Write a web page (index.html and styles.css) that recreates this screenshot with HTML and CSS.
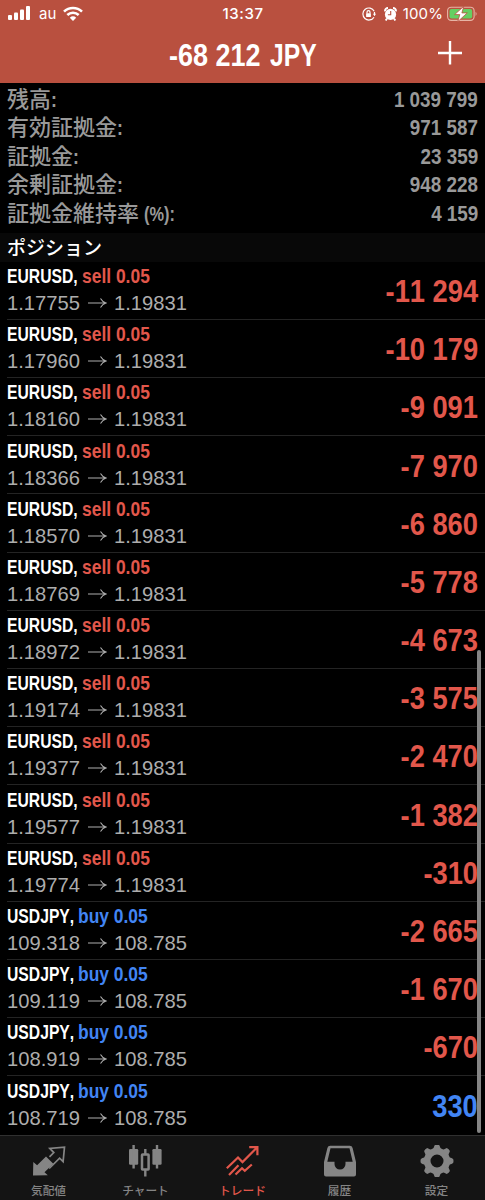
FILE: index.html
```html
<!DOCTYPE html>
<html lang="ja">
<head>
<meta charset="utf-8">
<title>トレード</title>
<link rel="stylesheet" href="styles.css">
</head>
<body>
<div class="app">
  <header class="top">
    <div class="status">
      <div class="status-left">
        <svg class="signal" width="22" height="14" viewBox="0 0 22 14"><rect x="0" y="9" width="4" height="5" rx="1"/><rect x="6" y="6.500" width="4" height="7.500" rx="1"/><rect x="12" y="3.500" width="4" height="10.500" rx="1"/><rect x="18" y="0" width="4" height="14" rx="1"/></svg>
        <span class="carrier">au</span>
        <svg class="wifi" width="20" height="15" viewBox="0 0 20 15" fill="none" stroke="#fff" stroke-width="2.600"><path d="M1 5.600A13 13 0 0 1 19 5.600"/><path d="M4.300 9A8.300 8.300 0 0 1 15.700 9"/><path d="M10 15L6.800 11.700A4.700 4.700 0 0 1 13.200 11.700Z" fill="#fff" stroke="none"/></svg>
      </div>
      <div class="clock">13:37</div>
      <div class="status-right">
        <svg width="14" height="14" viewBox="0 0 14 14" fill="none" stroke="#fff" stroke-width="1.200"><path d="M12.200 4.200A6 6 0 1 0 12 10.200M12.500 5v3.500"/><path d="M10.900 6.700h3.100l-1.500 2.200z" fill="#fff" stroke="none"/><rect x="4.100" y="6.200" width="4.800" height="3.800" rx=".6" fill="#fff" stroke="none"/><path d="M5 6.500V5.200a1.500 1.500 0 0 1 3 0v1.300"/></svg>
        <svg class="alarm" width="13" height="14" viewBox="0 0 13 14"><circle cx="6.500" cy="7.400" r="5.600" fill="#fff"/><path d="M1 4.300A3 3 0 0 1 4 1M12 4.300A3 3 0 0 0 9 1M3 11.500l-1.300 2M10 11.500l1.300 2" fill="none" stroke="#fff" stroke-width="1.900"/><path d="M6.700 4v3.700H3.900" fill="none" stroke="#b9503f" stroke-width="1.100"/></svg>
        <span class="percent">100%</span>
        <svg class="battery" width="31" height="16" viewBox="0 0 31 16"><rect x=".6" y="1.200" width="26.500" height="13.200" rx="3.600" fill="none" stroke="#e7b5a6" stroke-width="1.100"/><rect x="2.500" y="3" width="22.700" height="9.600" rx="2" fill="#65cf62"/><path d="M28.500 5.700q2.400 2 0 4.300z" fill="#dda294"/><path d="M16.800.3L7.600 8.600h5.200L10.700 15.700 20.300 6.900h-5.400z" fill="#fff" stroke="#b9503f" stroke-width=".8"/></svg>
      </div>
    </div>
    <div class="title-bar">
      <div class="title"><span class="amount">-68 212</span><span class="currency">JPY</span></div>
      <svg class="plus" width="24" height="24" viewBox="0 0 24 24"><path d="M12 0v23.500M0 12h24" stroke="#fff" stroke-width="2.400"/></svg>
    </div>
  </header>
  <section class="summary">
    <div class="line"><div class="label">残高<i>:</i></div><b>1 039 799</b></div>
    <div class="line"><div class="label">有効証拠金<i>:</i></div><b>971 587</b></div>
    <div class="line"><div class="label">証拠金<i>:</i></div><b>23 359</b></div>
    <div class="line"><div class="label">余剰証拠金<i>:</i></div><b>948 228</b></div>
    <div class="line"><div class="label">証拠金維持率<i class="unit">(%):</i></div><b>4 159</b></div>
  </section>
  <h2 class="section">ポジション</h2>
  <main class="list" id="list"></main>
  <nav class="tabs">
    <div class="tab"><svg width="34" height="32" viewBox="0 0 34 32"><path d="M1 30.500L1.300 17l3.800 3.300L14 11.600l7.300 7.200-8.800 8.500 3.300 2.900z" fill="currentColor"/><path d="M17.200 23.500L27.600 13.200l3.500 3.400L32.500 2.200 17.800 3.400l4 4.200-4.300 4.200" fill="none" stroke="currentColor" stroke-width="1.700"/></svg><span>気配値</span></div>
    <div class="tab"><svg width="34" height="32" viewBox="0 0 34 32" fill="currentColor"><rect x="0" y="4" width="9.200" height="15.800" rx="1.200"/><rect x="23.400" y="4" width="9.200" height="15.800" rx="1.200"/><path d="M4.600 0v23.500M28 0v23.500M16.300 4v5M16.300 24.500v7" stroke="currentColor" stroke-width="2.400"/><rect x="13" y="9.500" width="6.600" height="15" rx=".5" fill="none" stroke="currentColor" stroke-width="2.500"/></svg><span>チャート</span></div>
    <div class="tab active"><svg width="34" height="32" viewBox="0 0 34 32" fill="none" stroke="currentColor" stroke-width="2.200"><path d="M.8 23.200L12 12.500l4.500 4.600L31 2.500M23.200 2.200h8.200v8M3 30l9.500-9.800M9.500 29.500l6.500-6.300 2.800 2.600 7-6.300"/></svg><span>トレード</span></div>
    <div class="tab"><svg width="34" height="32" viewBox="0 0 34 32"><path fill="currentColor" fill-rule="evenodd" d="M7.200.8h19.600q2.200 0 2.800 2.200L33 17v12.500q0 2-2 2H3q-2 0-2-2V17L4.400 3Q5 .8 7.200.8zM7.500 3.200L4.300 16.800h7.200v2.200a5.500 5.500 0 0 0 11 0v-2.200h7.200L26.500 3.200z"/></svg><span>履歴</span></div>
    <div class="tab"><svg width="34" height="32" viewBox="0 0 34 32"><path id="gear" fill="currentColor" fill-rule="evenodd"/></svg><span>設定</span></div>
  </nav>
  <div class="scrollbar"></div>
</div>
<script src="script.js"></script>
</body>
</html>
```
FILE: styles.css
```css
* { box-sizing: border-box; }
body {
  margin: 0;
  background: #000;
  color: #fff;
  font-family: "Liberation Sans", "Noto Sans CJK JP", sans-serif;
  font-kerning: none;
}
svg { display: block; flex: none; }
.app {
  position: relative;
  width: 485px;
  height: 1200px;
  display: flex;
  flex-direction: column;
  overflow: hidden;
}
.top { height: 83px; background: #b9503f; flex: none; }
.status {
  height: 27px;
  display: grid;
  grid-template-columns: 1fr auto 1fr;
  align-items: center;
  padding: 0 7px 0 8px;
}
.status-left, .status-right { display: flex; align-items: center; }
.status-right { justify-content: flex-end; }
.signal { fill: #fff; margin-top: -1px; }
.carrier { font: 15px/27px Inter, sans-serif; margin: 0 7px 0 9px; }
.wifi { margin-top: -1px; }
.clock { font: 500 15px/27px Inter, sans-serif; letter-spacing: .6px; }
.alarm { margin-left: 8px; }
.percent { font: 15px/27px Inter, sans-serif; letter-spacing: .1px; margin: 0 4px 0 6px; }
.title-bar {
  height: 56px;
  display: grid;
  grid-template-columns: 1fr auto 1fr;
  align-items: center;
}
.title {
  grid-column: 2;
  display: flex;
  width: 147px;
  font-size: 30.5px;
  font-weight: 700;
  line-height: 56px;
  white-space: nowrap;
}
.amount, .currency { transform-origin: 0 50%; }
.amount { width: 100.5px; transform: scaleX(.885); }
.currency { width: 46.5px; transform: scaleX(.81); }
.plus { justify-self: end; margin: -4px 23px 0 0; }
.summary { height: 150px; padding: 3px 7px 0; color: #999; flex: none; }
.line { height: 28.4px; display: flex; justify-content: space-between; line-height: 28px; }
.label { display: flex; font-size: 22px; font-weight: 500; }
.label i { font-style: normal; font-weight: 700; transform: scaleX(.8); transform-origin: 0 50%; }
.label .unit { margin-left: 5px; font-size: 21px; transform: scaleX(.78); }
.line b { font-size: 21.3px; transform: scaleX(.885); transform-origin: 100% 50%; }
.section {
  margin: 0;
  height: 28.7px;
  padding-left: 7px;
  background: #080808;
  font: 500 19px/28px "Noto Sans CJK JP", sans-serif;
  flex: none;
}
.list { height: 873px; flex: none; }
.row {
  height: 58.2px;
  margin-left: 7px;
  padding: 1.3px 7px 0 0;
  display: flex;
  justify-content: space-between;
  border-bottom: 1px solid #242424;
  white-space: nowrap;
}
.row:last-child { border-bottom: 0; }
.name, .price { height: 26px; line-height: 26px; display: flex; }
.price { height: 28px; line-height: 28px; }
.name { font-size: 20.5px; font-weight: 700; }
.symbol { width: 75px; transform: scaleX(.766); transform-origin: 0 50%; }
.symbol.buy { width: 71px; }
.side { transform: scaleX(.85); transform-origin: 0 50%; }
.price { font-size: 20.2px; color: #adadad; align-items: center; }
.price .open { width: 81px; }
.price .arrow { margin-right: 7px; }
.profit {
  font-size: 31px;
  font-weight: 700;
  line-height: 57.5px;
  transform: scaleX(.88);
  transform-origin: 100% 50%;
}
.red { color: #e2574b; }
.blue { color: #4285f4; }
.tabs {
  flex: 1;
  display: grid;
  grid-template-columns: repeat(5, 97px);
  background: #141414;
  border-top: 1px solid #303030;
}
.tab {
  display: flex;
  flex-direction: column;
  align-items: center;
  padding-top: 9px;
  color: #858585;
  font: 500 11.7px/16px "Noto Sans CJK JP", sans-serif;
}
.tab span { margin-top: 5px; }
.tab.active { color: #e2574b; }
.scrollbar {
  position: absolute;
  right: 4px;
  top: 650px;
  width: 4px;
  height: 483px;
  border-radius: 2px;
  background: #858585;
}
```
FILE: script.js
```js
const sells = [
  ["1.17755", "-11 294"], ["1.17960", "-10 179"], ["1.18160", "-9 091"],
  ["1.18366", "-7 970"], ["1.18570", "-6 860"], ["1.18769", "-5 778"],
  ["1.18972", "-4 673"], ["1.19174", "-3 575"], ["1.19377", "-2 470"],
  ["1.19577", "-1 382"], ["1.19774", "-310"]
];
const buys = [["109.318", "-2 665"], ["109.119", "-1 670"], ["108.919", "-670"], ["108.719", "330"]];

function row(symbol, side, current, [open, profit]) {
  const sideColor = side === "sell" ? "red" : "blue";
  const profitColor = profit.startsWith("-") ? "red" : "blue";
  return `<div class="row"><div>
    <div class="name"><span class="symbol ${side}">${symbol},</span><span class="side ${sideColor}">${side} 0.05</span></div>
    <div class="price"><span class="open">${open}</span><svg class="arrow" width="19" height="12" viewBox="0 0 19 12"><path d="M0 6h18M12.500 1.500Q14.500 5 18 6Q14.500 7 12.500 10.500" fill="none" stroke="currentColor" stroke-width="1.100"/></svg><span>${current}</span></div>
  </div><div class="profit ${profitColor}">${profit}</div></div>`;
}

document.getElementById("list").innerHTML =
  sells.map(r => row("EURUSD", "sell", "1.19831", r)).join("") +
  buys.map(r => row("USDJPY", "buy", "108.785", r)).join("");

// Eight-tooth gear outline with a round hub opening
const points = [];
for (let i = 0; i < 96; i++) {
  const a = i / 96 * Math.PI * 2;
  const r = 14.8 + 1.7 * Math.tanh(2.5 * Math.cos(8 * a));
  points.push(`${(17 + r * Math.cos(a)).toFixed(2)} ${(16 + r * Math.sin(a)).toFixed(2)}`);
}
document.getElementById("gear").setAttribute("d",
  `M${points.join("L")}ZM10.500 16a6.500 6.500 0 1 0 13 0a6.500 6.500 0 1 0 -13 0Z`);
```
